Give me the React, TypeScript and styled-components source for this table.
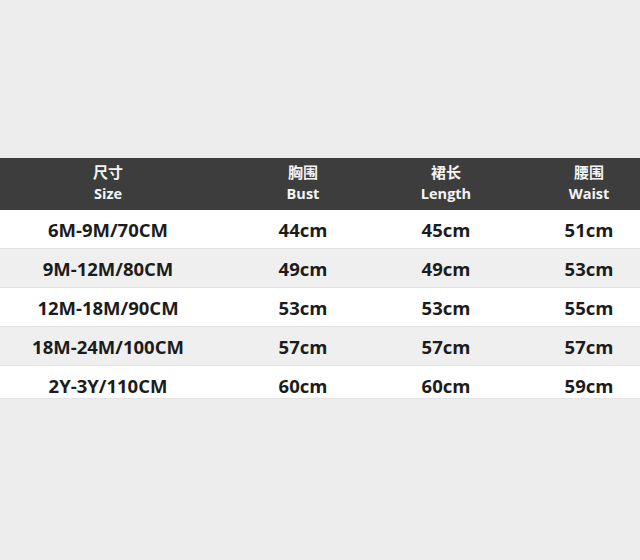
import React from 'react';
import styled, { createGlobalStyle } from 'styled-components';

const GlobalStyle = createGlobalStyle`
  html, body {
    margin: 0;
    padding: 0;
    background: #ededed;
  }
  body {
    font-family: "Open Sans", "Noto Sans CJK SC", sans-serif;
  }
`;

const Page = styled.div`
  width: 640px;
  height: 560px;
  padding-top: 158px;
  box-sizing: border-box;
  overflow: hidden;
`;

const COLUMNS = '216px 174px 112px 138px';

const Header = styled.div`
  display: grid;
  grid-template-columns: ${COLUMNS};
  height: 52px;
  background: #3d3d3d;
  color: #f4f4f4;
`;

const HeadCell = styled.div<{ $shift?: number }>`
  display: flex;
  flex-direction: column;
  align-items: center;
  justify-content: center;
  padding-left: ${(p) => (p.$shift ?? 0) * 2}px;
  padding-bottom: 2px;
`;

const HeadCn = styled.span`
  font-family: "Noto Sans CJK SC", sans-serif;
  font-size: 15px;
  font-weight: 700;
  line-height: 22px;
`;

const HeadEn = styled.span`
  font-size: 14.5px;
  font-weight: 700;
  line-height: 22px;
`;

const Row = styled.div<{ $shade: boolean; $height: number }>`
  display: grid;
  grid-template-columns: ${COLUMNS};
  height: ${(p) => p.$height}px;
  overflow: hidden;
  background: ${(p) => (p.$shade ? '#efefef' : '#ffffff')};
  box-shadow: inset 0 -1px 0 #e3e3e3;
`;

const Cell = styled.div<{ $shift?: number }>`
  text-align: center;
  padding-left: ${(p) => (p.$shift ?? 0) * 2}px;
  font-size: 18.5px;
  font-weight: 700;
  line-height: 40px;
  color: #1c1c1c;
`;

const heads = [
  { cn: '尺寸', en: 'Size' },
  { cn: '胸围', en: 'Bust' },
  { cn: '裙长', en: 'Length' },
  { cn: '腰围', en: 'Waist' },
];

const rows = [
  ['6M-9M/70CM', '44cm', '45cm', '51cm'],
  ['9M-12M/80CM', '49cm', '49cm', '53cm'],
  ['12M-18M/90CM', '53cm', '53cm', '55cm'],
  ['18M-24M/100CM', '57cm', '57cm', '57cm'],
  ['2Y-3Y/110CM', '60cm', '60cm', '59cm'],
];

// last column sits right of its grid track centre
const shiftFor = (i: number) => (i === 3 ? 18 : 0);

export default function App() {
  return (
    <>
      <GlobalStyle />
      <Page>
        <Header>
          {heads.map((h, i) => (
            <HeadCell key={h.en} $shift={shiftFor(i)}>
              <HeadCn>{h.cn}</HeadCn>
              <HeadEn>{h.en}</HeadEn>
            </HeadCell>
          ))}
        </Header>
        {rows.map((r, ri) => (
          <Row key={r[0]} $shade={ri % 2 === 1} $height={ri === rows.length - 1 ? 33 : 39}>
            {r.map((v, i) => (
              <Cell key={i} $shift={shiftFor(i)}>{v}</Cell>
            ))}
          </Row>
        ))}
      </Page>
    </>
  );
}
